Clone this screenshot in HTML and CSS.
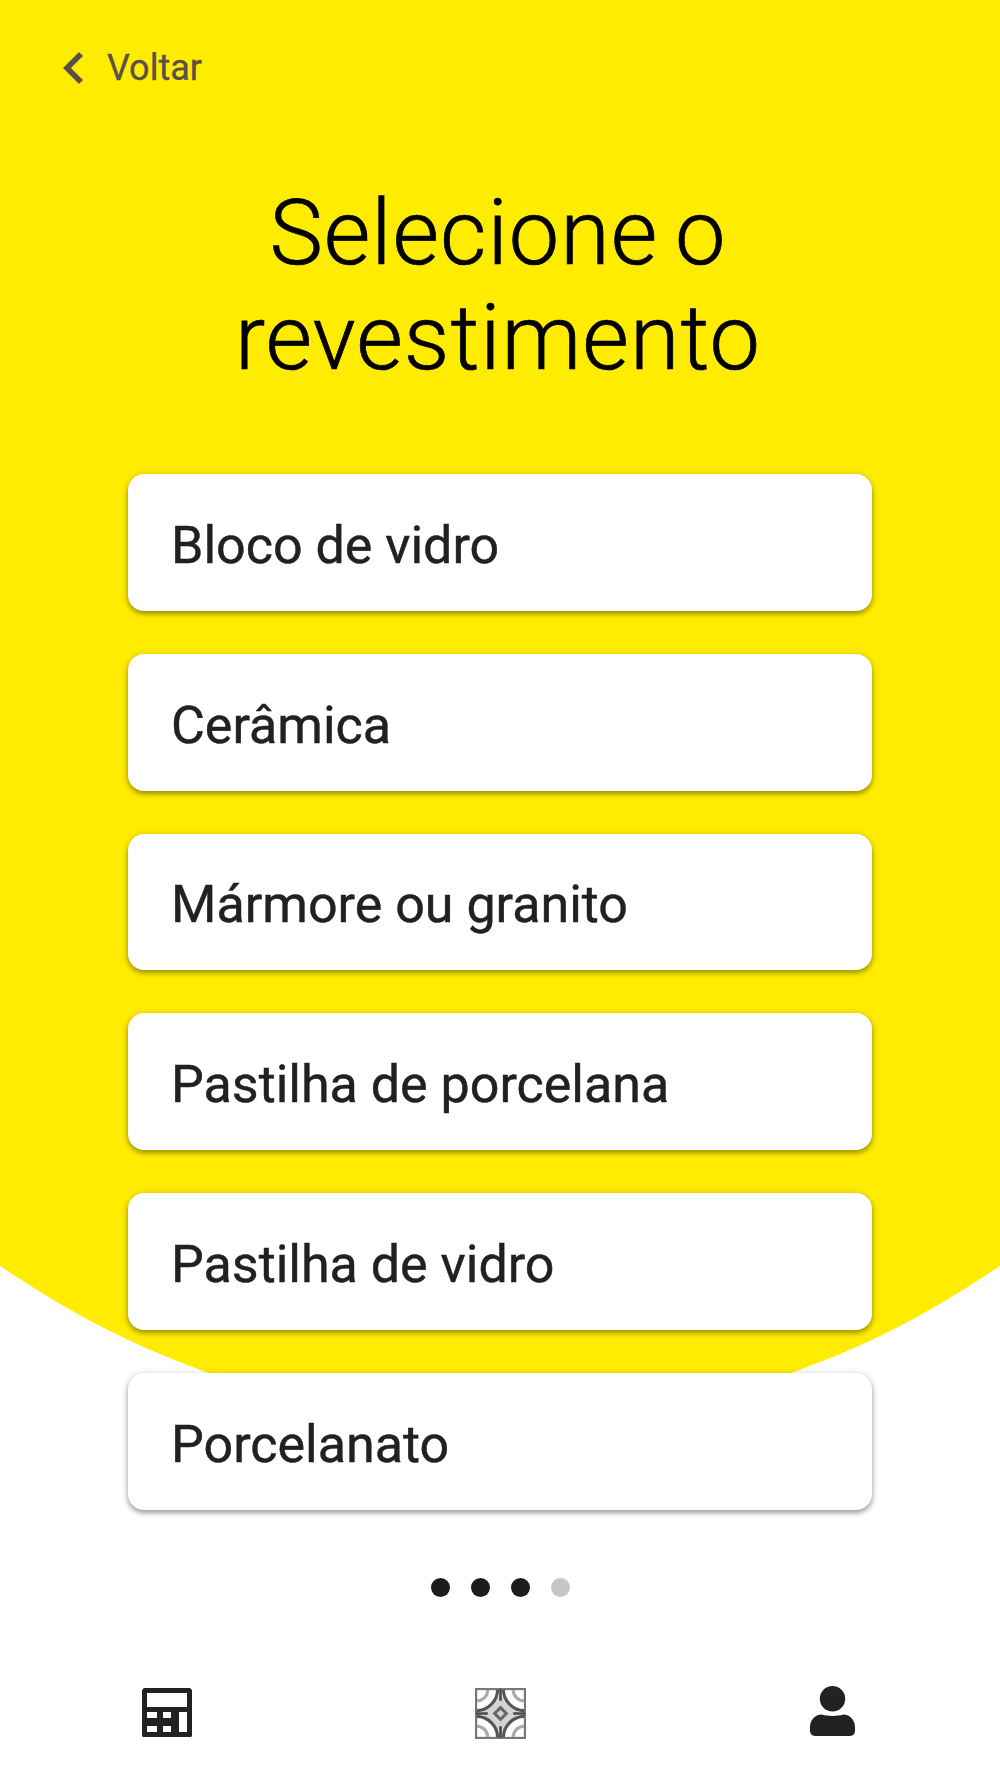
FILE: index.html
```html
<!DOCTYPE html>
<html lang="pt">
<head>
<meta charset="utf-8">
<title>Selecione o revestimento</title>
<link rel="stylesheet" href="styles.css">
</head>
<body>
<div class="page">
  <div class="backdrop"></div>
  <a class="back">
    <svg class="chevron" viewBox="0 0 22 34"><path d="M19 3 L5 17 L19 31" fill="none" stroke="#5a4f4a" stroke-width="5.6"/></svg>
    <span>Voltar</span>
  </a>
  <h1 class="title">Selecione o<br>revestimento</h1>
  <div class="list">
    <div class="card">Bloco de vidro</div>
    <div class="card">Cerâmica</div>
    <div class="card">Mármore ou granito</div>
    <div class="card">Pastilha de porcelana</div>
    <div class="card">Pastilha de vidro</div>
    <div class="card">Porcelanato</div>
  </div>
  <div class="dots">
    <span class="dot"></span><span class="dot"></span><span class="dot"></span><span class="dot off"></span>
  </div>
  <nav class="nav">
    <svg class="icon calc" viewBox="0 0 50 49">
      <path fill="#222" fill-rule="evenodd" d="M2 0H48L50 2V48L49 49H1L0 48V2Z M5 5V19H45V5Z M5 24V30H15V24Z M21 24V30H29V24Z M37 24V44H45V24Z M5 38V44H15V38Z M21 38V44H29V38Z"/>
    </svg>
    <svg class="icon tile" viewBox="0 0 52 52">
      <rect x="1" y="1" width="50" height="50" fill="#fff" stroke="#777" stroke-width="2.4"/>
      <path fill="#d4d4d4" d="M26 7L45 26L26 45L7 26Z"/>
      <g fill="none">
        <path stroke="#444" stroke-width="2.6" d="M26 1V13M26 39V51M1 26H13M39 26H51"/>
        <path stroke="#555" stroke-width="3.2" d="M2 23C13 23 23 13 23 2M29 2C29 13 39 23 50 23M2 29C13 29 23 39 23 50M50 29C39 29 29 39 29 50"/>
        <path stroke="#aaa" stroke-width="3.2" d="M2 13C8 13 13 8 13 2M39 2C39 8 44 13 50 13M2 39C8 39 13 44 13 50M50 39C44 39 39 44 39 50"/>
        <path stroke="#666" stroke-width="3" d="M26 20L32 26L26 32L20 26Z"/>
      </g>
    </svg>
    <svg class="icon person" viewBox="0 0 46 52">
      <circle cx="23" cy="13" r="13" fill="#222"/>
      <path fill="#222" d="M12 29C18 31 28 31 34 29C41 29 46 35 46 42V46C46 49 44 51 41 51H5C2 51 0 49 0 46V42C0 35 5 29 12 29Z"/>
    </svg>
  </nav>
</div>
</body>
</html>
```

FILE: styles.css
```css
html, body { margin: 0; padding: 0; background: #fff; }
.page {
  position: relative;
  width: 1000px;
  height: 1778px;
  overflow: hidden;
  font-family: Roboto, "Liberation Sans", sans-serif;
  display: flex;
  flex-direction: column;
  align-items: center;
  background: #fff;
}
.backdrop {
  position: absolute;
  left: -373px;
  top: -323px;
  width: 1746px;
  height: 1746px;
  border-radius: 50%;
  background: #ffec00;
}
.back {
  position: relative;
  align-self: flex-start;
  display: flex;
  align-items: center;
  gap: 23px;
  margin: 46px 0 0 62px;
  height: 44px;
  color: #5a4f4a;
  font-size: 36px;
  -webkit-text-stroke: 0.3px #5a4f4a;
}
.chevron { width: 22px; height: 34px; }
.title {
  position: relative;
  margin: 91px 0 0;
  font-size: 90px;
  font-weight: 300;
  line-height: 105px;
  text-align: center;
  color: #000;
  letter-spacing: 1px;
  word-spacing: -6px;
  -webkit-text-stroke: 0.7px #000;
  transform: translateX(-2px);
}
.list {
  position: relative;
  width: 744px;
  margin-top: 83px;
  display: flex;
  flex-direction: column;
  gap: 43px;
}
.card {
  height: 136.8px;
  box-sizing: border-box;
  padding: 6px 43px 0;
  display: flex;
  align-items: center;
  background: #fff;
  border-radius: 16px;
  color: #212121;
  font-size: 52px;
  -webkit-text-stroke: 0.45px #212121;
  box-shadow: 0 3px 5px rgba(0,0,0,.32), 0 1px 8px rgba(0,0,0,.14);
}
.dots {
  position: relative;
  display: flex;
  gap: 21px;
  margin-top: 68px;
}
.dot { width: 19px; height: 19px; border-radius: 50%; background: #1c1c1c; }
.dot.off { background: #c6c6c6; }
.nav {
  position: relative;
  width: 1000px;
  height: 54px;
  margin-top: 89px;
}
.icon { position: absolute; display: block; }
.calc { left: 142px; top: 2px; width: 50px; height: 49px; }
.tile { left: 475px; top: 2px; width: 51px; height: 51px; filter: blur(0.5px); }
.person { left: 810px; top: 0; width: 45px; height: 51px; }
```
